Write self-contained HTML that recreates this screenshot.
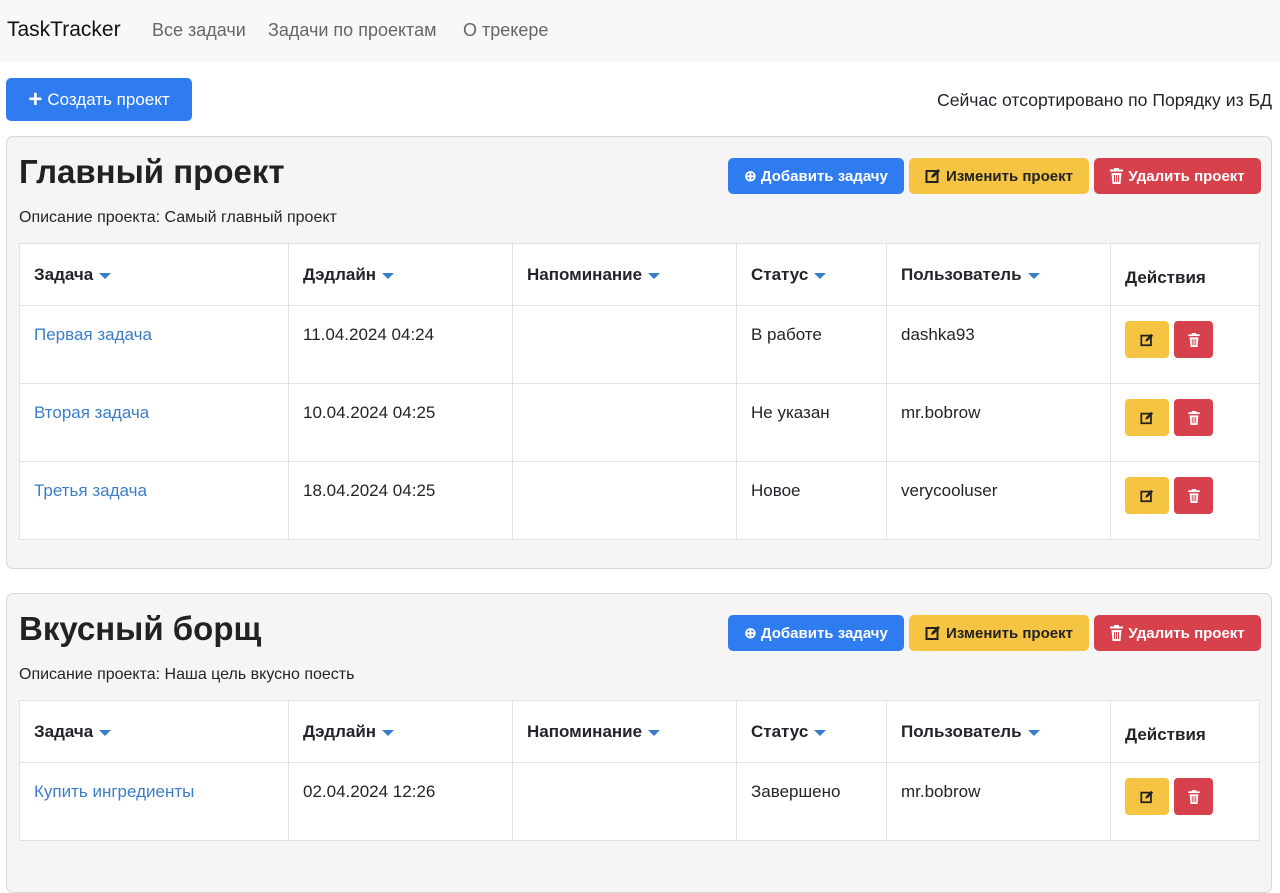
<!DOCTYPE html>
<html><head><meta charset="utf-8"><style>
*{box-sizing:border-box;margin:0;padding:0}
body{width:1280px;height:835px;overflow:hidden;background:#fff;font-family:"Liberation Sans",sans-serif;color:#212529;font-size:16px}
.nav{height:62px;background:#f8f8f8;position:relative}
.nav span{position:absolute;top:20px;font-size:18px;color:#666}
.brand{left:7px;color:#111!important;font-size:21px!important;top:18px!important}
.btn{position:absolute;border-radius:5px;font-weight:bold;font-size:15px;display:flex;align-items:center;justify-content:center;gap:5px}
.blue{background:#2f7bf0;color:#fff}.yel{background:#f5c443;color:#222}.red{background:#d6414b;color:#fff}
.card{position:absolute;left:6px;width:1266px;background:#f5f5f5;border:1px solid #d8d8d8;border-radius:7px}
.card h2{position:absolute;left:12px;font-size:33px;font-weight:bold;color:#222}
.card .d{position:absolute;left:12px;font-size:16px}
table{position:absolute;left:12px;border-collapse:collapse;background:#fff;width:1241px}
td,th{border:1px solid #e2e2e2;padding:0 14px;text-align:left;vertical-align:top;font-size:17px}
th{height:62px;padding-top:21px}
td{height:78px;padding-top:19px}
a{color:#3a7dc9;text-decoration:none}
.c{display:inline-block;width:0;height:0;border-left:6px solid transparent;border-right:6px solid transparent;border-top:6px solid #3a7dc9;margin-left:6px;vertical-align:middle}
.sb{display:inline-flex;width:44px;height:37px;border-radius:4px;align-items:center;justify-content:center;margin-right:5px;vertical-align:top}
td.a{padding-top:15px}
svg{display:block}
</style></head><body>
<div class="nav"><span class="brand">TaskTracker</span><span style="left:152px">Все задачи</span><span style="left:268px">Задачи по проектам</span><span style="left:463px">О трекере</span></div>
<div class="btn blue" style="left:6px;top:78px;width:186px;height:43px;font-weight:normal;font-size:17px"><b style="font-size:24px">+</b>Создать проект</div>
<div style="position:absolute;right:8px;top:90px;font-size:17.6px">Сейчас отсортировано по Порядку из БД</div>

<div class="card" style="top:136px;height:433px">
<h2 style="top:16px">Главный проект</h2>
<div class="btn blue" style="left:721px;top:21px;width:176px;height:36px">⊕ Добавить задачу</div>
<div class="btn yel" style="left:902px;top:21px;width:180px;height:36px"><svg width="16" height="16" viewBox="0 0 16 16"><rect x="1.5" y="3" width="11" height="11" fill="none" stroke="#222" stroke-width="2"/><path d="M6 10 L7 7 L13 1 L15 3 L9 9 Z" fill="#222"/></svg>Изменить проект</div>
<div class="btn red" style="left:1087px;top:21px;width:167px;height:36px"><svg width="13" height="16" viewBox="0 0 13 16"><rect x="0" y="1.5" width="13" height="2" fill="#fff"/><rect x="4" y="0" width="5" height="2" fill="#fff"/><path d="M1.5 5h10l-1 11h-8z" fill="#fff"/><path d="M4.5 7v7M6.5 7v7M8.5 7v7" stroke="#d6414b" stroke-width="1"/></svg>Удалить проект</div>
<div class="d" style="top:72px">Описание проекта: Самый главный проект</div>
<table style="top:106px">
<tr><th style="width:269px">Задача<span class="c"></span></th><th style="width:224px">Дэдлайн<span class="c"></span></th><th style="width:224px">Напоминание<span class="c"></span></th><th style="width:150px">Статус<span class="c"></span></th><th style="width:224px">Пользователь<span class="c"></span></th><th style="padding-top:24px">Действия</th></tr>
<tr><td><a>Первая задача</a></td><td>11.04.2024 04:24</td><td></td><td>В работе</td><td>dashka93</td><td class="a"><span class="sb yel"><svg width="14" height="14" viewBox="0 0 16 16"><rect x="1.5" y="3" width="11" height="11" fill="none" stroke="#222" stroke-width="2"/><path d="M6 10 L7 7 L13 1 L15 3 L9 9 Z" fill="#222"/></svg></span><span class="sb red" style="width:39px"><svg width="12" height="14" viewBox="0 0 13 16"><rect x="0" y="1.5" width="13" height="2" fill="#fff"/><rect x="4" y="0" width="5" height="2" fill="#fff"/><path d="M1.5 5h10l-1 11h-8z" fill="#fff"/><path d="M4.5 7v7M6.5 7v7M8.5 7v7" stroke="#d6414b" stroke-width="1"/></svg></span></td></tr>
<tr><td><a>Вторая задача</a></td><td>10.04.2024 04:25</td><td></td><td>Не указан</td><td>mr.bobrow</td><td class="a"><span class="sb yel"><svg width="14" height="14" viewBox="0 0 16 16"><rect x="1.5" y="3" width="11" height="11" fill="none" stroke="#222" stroke-width="2"/><path d="M6 10 L7 7 L13 1 L15 3 L9 9 Z" fill="#222"/></svg></span><span class="sb red" style="width:39px"><svg width="12" height="14" viewBox="0 0 13 16"><rect x="0" y="1.5" width="13" height="2" fill="#fff"/><rect x="4" y="0" width="5" height="2" fill="#fff"/><path d="M1.5 5h10l-1 11h-8z" fill="#fff"/><path d="M4.5 7v7M6.5 7v7M8.5 7v7" stroke="#d6414b" stroke-width="1"/></svg></span></td></tr>
<tr><td><a>Третья задача</a></td><td>18.04.2024 04:25</td><td></td><td>Новое</td><td>verycooluser</td><td class="a"><span class="sb yel"><svg width="14" height="14" viewBox="0 0 16 16"><rect x="1.5" y="3" width="11" height="11" fill="none" stroke="#222" stroke-width="2"/><path d="M6 10 L7 7 L13 1 L15 3 L9 9 Z" fill="#222"/></svg></span><span class="sb red" style="width:39px"><svg width="12" height="14" viewBox="0 0 13 16"><rect x="0" y="1.5" width="13" height="2" fill="#fff"/><rect x="4" y="0" width="5" height="2" fill="#fff"/><path d="M1.5 5h10l-1 11h-8z" fill="#fff"/><path d="M4.5 7v7M6.5 7v7M8.5 7v7" stroke="#d6414b" stroke-width="1"/></svg></span></td></tr>
</table>
</div>

<div class="card" style="top:593px;height:300px">
<h2 style="top:16px">Вкусный борщ</h2>
<div class="btn blue" style="left:721px;top:21px;width:176px;height:36px">⊕ Добавить задачу</div>
<div class="btn yel" style="left:902px;top:21px;width:180px;height:36px"><svg width="16" height="16" viewBox="0 0 16 16"><rect x="1.5" y="3" width="11" height="11" fill="none" stroke="#222" stroke-width="2"/><path d="M6 10 L7 7 L13 1 L15 3 L9 9 Z" fill="#222"/></svg>Изменить проект</div>
<div class="btn red" style="left:1087px;top:21px;width:167px;height:36px"><svg width="13" height="16" viewBox="0 0 13 16"><rect x="0" y="1.5" width="13" height="2" fill="#fff"/><rect x="4" y="0" width="5" height="2" fill="#fff"/><path d="M1.5 5h10l-1 11h-8z" fill="#fff"/><path d="M4.5 7v7M6.5 7v7M8.5 7v7" stroke="#d6414b" stroke-width="1"/></svg>Удалить проект</div>
<div class="d" style="top:72px">Описание проекта: Наша цель вкусно поесть</div>
<table style="top:106px">
<tr><th style="width:269px">Задача<span class="c"></span></th><th style="width:224px">Дэдлайн<span class="c"></span></th><th style="width:224px">Напоминание<span class="c"></span></th><th style="width:150px">Статус<span class="c"></span></th><th style="width:224px">Пользователь<span class="c"></span></th><th style="padding-top:24px">Действия</th></tr>
<tr><td><a>Купить ингредиенты</a></td><td>02.04.2024 12:26</td><td></td><td>Завершено</td><td>mr.bobrow</td><td class="a"><span class="sb yel"><svg width="14" height="14" viewBox="0 0 16 16"><rect x="1.5" y="3" width="11" height="11" fill="none" stroke="#222" stroke-width="2"/><path d="M6 10 L7 7 L13 1 L15 3 L9 9 Z" fill="#222"/></svg></span><span class="sb red" style="width:39px"><svg width="12" height="14" viewBox="0 0 13 16"><rect x="0" y="1.5" width="13" height="2" fill="#fff"/><rect x="4" y="0" width="5" height="2" fill="#fff"/><path d="M1.5 5h10l-1 11h-8z" fill="#fff"/><path d="M4.5 7v7M6.5 7v7M8.5 7v7" stroke="#d6414b" stroke-width="1"/></svg></span></td></tr>
</table>
</div>
</body></html>
